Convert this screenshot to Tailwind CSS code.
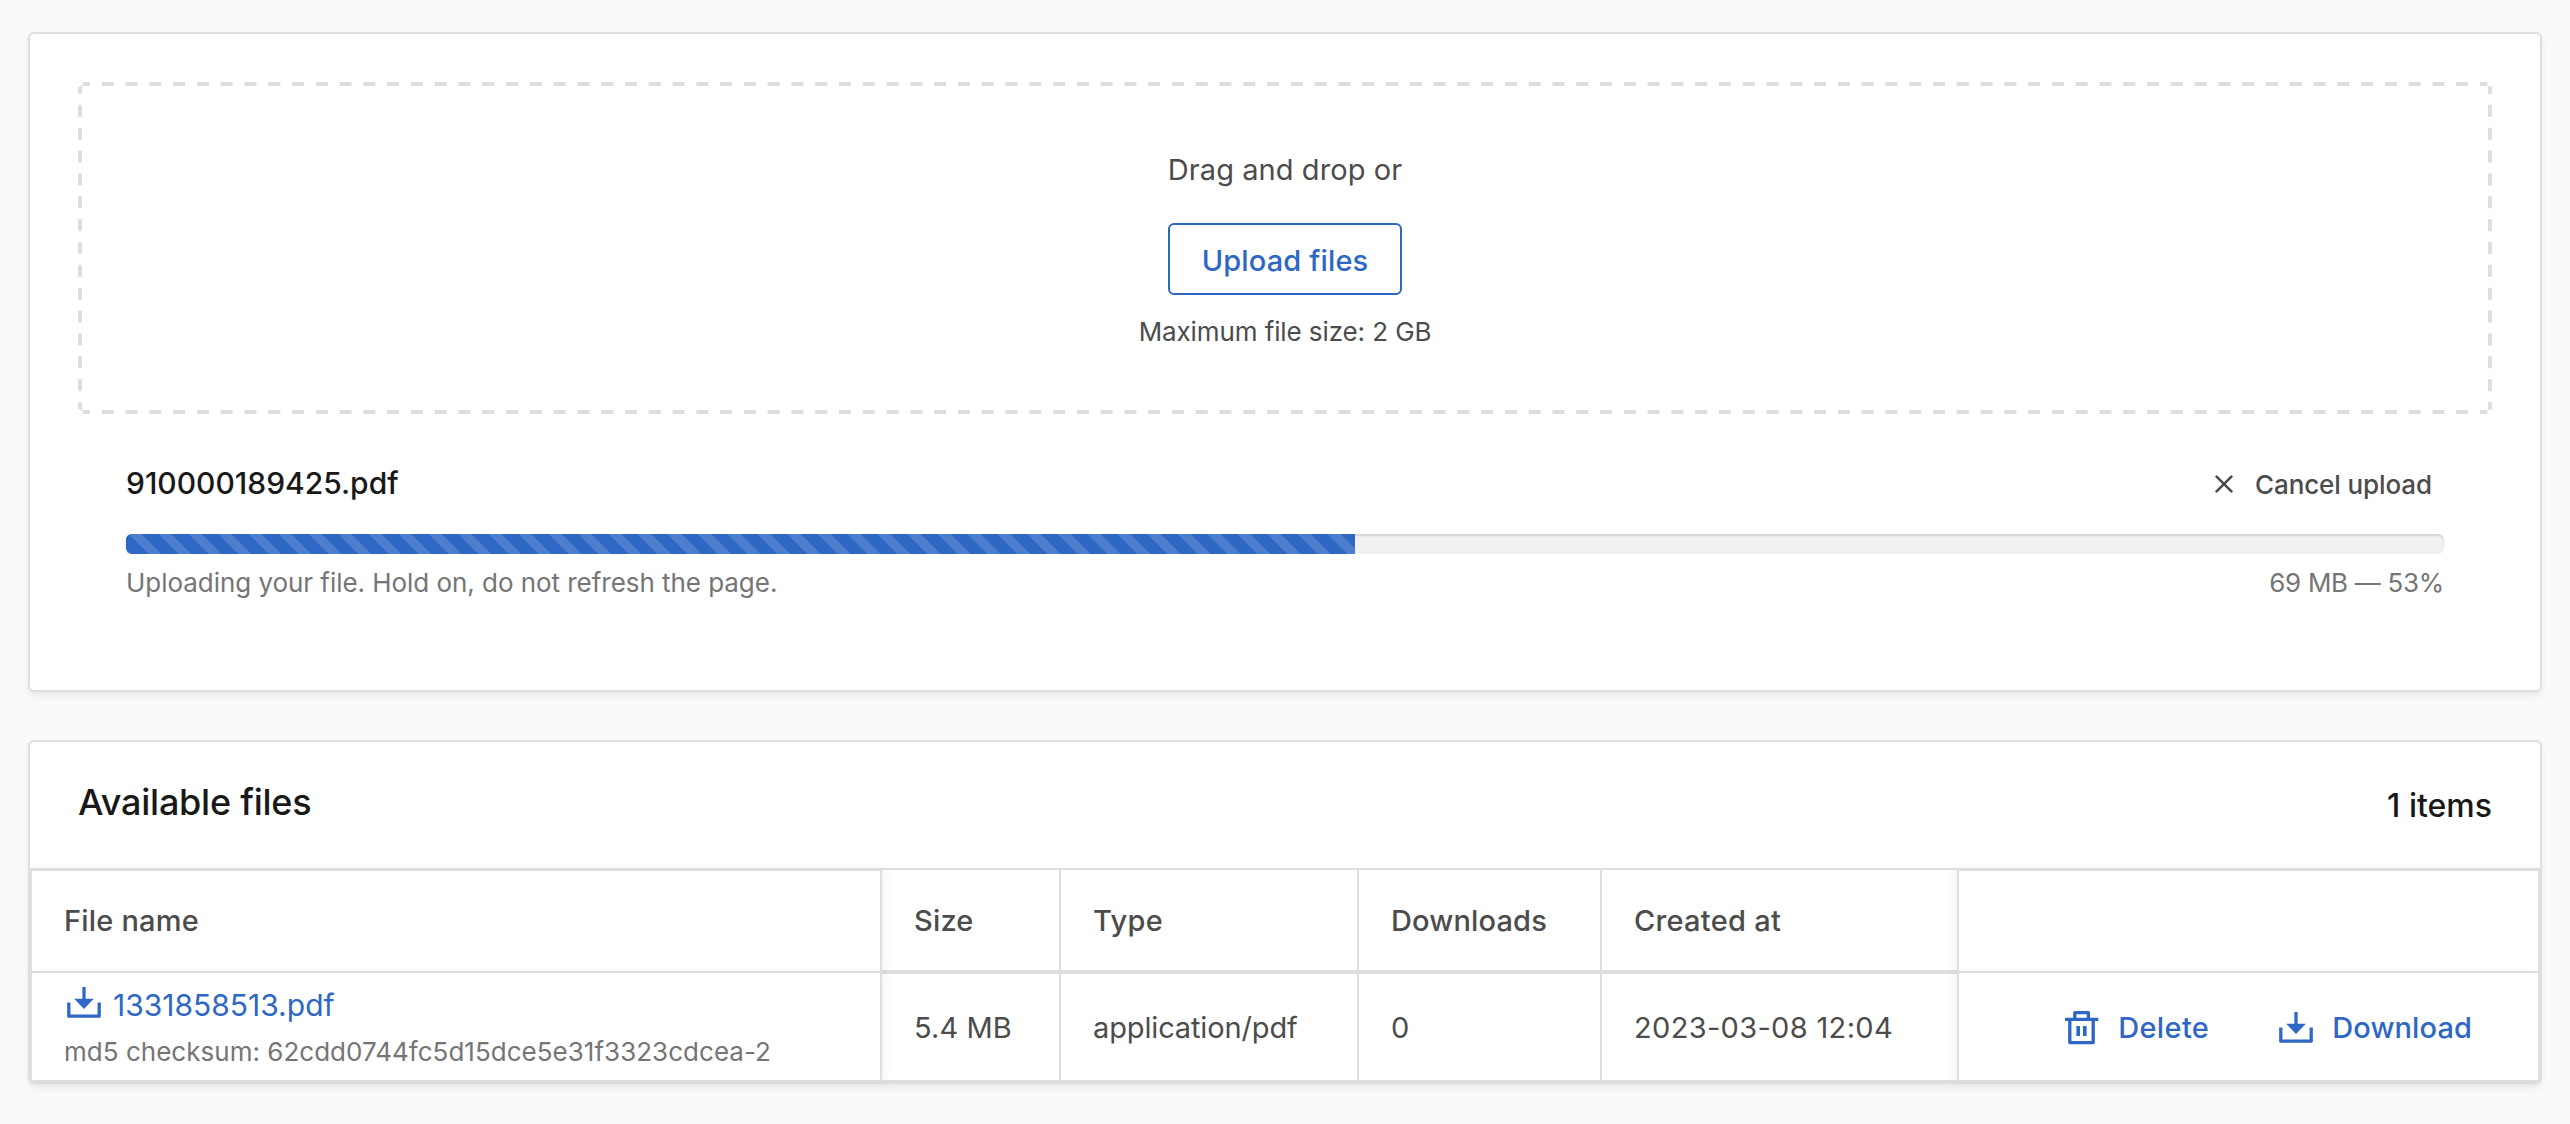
<!DOCTYPE html>
<html lang="en">
<head>
<meta charset="utf-8">
<title>Files</title>
<script src="https://cdn.jsdelivr.net/npm/@tailwindcss/browser@4"></script>
</head>
<body class="bg-[#fafafa] font-['Inter',sans-serif] text-[#4c4c4c]">
<main class="flex h-[1124px] w-[2570px] flex-col gap-12 pt-8 pr-7 pl-7">

  <section class="h-[660px] shrink-0 rounded-md border-2 border-[#dedede] bg-white px-12 pt-12 shadow-[0_4px_6px_rgba(0,0,0,0.07)]">
    <div class="relative flex h-[332px] flex-col items-center pt-[66px]">
      <svg class="absolute inset-0 h-full w-full" viewBox="0 0 2414 332" fill="none" stroke="#dedede" stroke-width="4">
        <path d="M0 2H2414M0 330H2414" stroke-dasharray="12 11.782"/>
        <path d="M2 0V332M2412 0V332" stroke-dasharray="12 10.857"/>
        <path d="M0 0h5L4 4L0 5zM2414 0h-5l1 4l4 1zM0 332h5l-1-4l-4-1zM2414 332h-5l1-4l4-1z" fill="#fff" stroke="none"/>
      </svg>
      <p class="text-[29px] leading-[44px] tracking-[0.07px]">Drag and drop or</p>
      <button class="mt-[31px] flex h-[72px] w-[234px] items-center justify-center rounded-md border-2 border-[#2e67c4] bg-white pt-[3px] text-[29px] leading-[44px] font-medium tracking-[0.14px] text-[#2e67c4]">Upload files</button>
      <p class="mt-[17px] text-[26px] leading-10 tracking-[-0.1px]">Maximum file size: 2 GB</p>
    </div>

    <div class="mx-12 mt-[47px]">
      <div class="flex items-center justify-between">
        <h2 class="text-[30px] leading-[44px] font-medium text-[#191919]">910000189425.pdf</h2>
        <button class="flex items-center gap-[22px] pr-3 text-[26px] leading-10 font-medium tracking-[-0.1px]">
          <svg class="mt-px h-[18px] w-[18px]" viewBox="0 0 18 18" fill="none" stroke="#4c4c4c" stroke-width="2.6" stroke-linecap="round"><path d="M1.6 1.6L16.4 16.4M16.4 1.6L1.6 16.4"/></svg>
          <span class="pt-[3px]">Cancel upload</span>
        </button>
      </div>
      <div class="mt-[29px] h-5 overflow-hidden rounded-md bg-[#f1f1f1] shadow-[inset_0_2px_2px_rgba(0,0,0,0.12)]">
        <div class="h-full w-[1229px] bg-[#2e67c4] bg-[repeating-linear-gradient(45deg,#4d7ecd_0px,#4d7ecd_3.54px,#2e67c4_3.54px,#2e67c4_15.56px,#4d7ecd_15.56px,#4d7ecd_21.213px)]"></div>
      </div>
      <div class="mt-[9px] flex justify-between text-[26px] leading-10 text-[#757575]">
        <p class="tracking-[-0.045px]">Uploading your file. Hold on, do not refresh the page.</p>
        <p class="tracking-[-0.3px]">69 MB — 53%</p>
      </div>
    </div>
  </section>

  <section class="h-[344px] shrink-0 rounded-md border-2 border-[#dedede] bg-white shadow-[0_4px_6px_rgba(0,0,0,0.07)]">
    <header class="flex h-[126px] items-start justify-between px-12 pt-9 font-medium text-[#191919]">
      <h2 class="text-[36px] leading-[48px] tracking-[-0.25px]">Available files</h2>
      <span class="mt-[5px] text-[32px] leading-[46px]">1 items</span>
    </header>

    <div class="grid grid-cols-[852px_179px_298px_243px_355px_583px] grid-rows-[104px_110px] text-[29px] leading-[44px] [&>div]:border-[#dedede]">
      <div class="z-10 flex items-center border-t-[3px] border-r-2 border-b border-l-2 bg-white pl-8 font-medium tracking-[0.2px] shadow-[4px_0_8px_rgba(0,0,0,0.04)]">File name</div>
      <div class="flex items-center border-y-2 border-r-2 pt-[2px] pl-8 font-medium tracking-[0.2px]">Size</div>
      <div class="flex items-center border-y-2 border-r-2 pt-[2px] pl-8 font-medium tracking-[0.3px]">Type</div>
      <div class="flex items-center border-y-2 border-r-2 pt-[2px] pl-8 font-medium tracking-[0.15px]">Downloads</div>
      <div class="flex items-center border-y-2 pt-[2px] pl-8 font-medium tracking-[0.28px]">Created at</div>
      <div class="z-10 border-x-2 border-t-[3px] border-b bg-white shadow-[-4px_0_8px_rgba(0,0,0,0.04)]"></div>

      <div class="z-10 flex flex-col border-t border-r-2 border-b-2 border-l-2 bg-white pt-[8px] pl-8 shadow-[4px_0_8px_rgba(0,0,0,0.04)]">
        <a class="flex items-center gap-3 pl-[3px] text-[30px] leading-[48px] text-[#2e67c4]">
          <svg class="-mt-[5px] h-[31px] w-[34px]" viewBox="0 0 34 31" fill="none" stroke="#2e67c4" stroke-width="3.3" stroke-linejoin="round"><path d="M1.8 15.5V29.2H32.2V15.5"/><path d="M17 0V13"/><path d="M7.2 11.8H26.8L17 22z" fill="#2e67c4" stroke="none"/></svg>
          <span>1331858513.pdf</span>
        </a>
        <span class="mt-[3px] text-[26px] leading-10 tracking-[0.02px] text-[#757575]">md5 checksum: 62cdd0744fc5d15dce5e31f3323cdcea-2</span>
      </div>
      <div class="flex items-center border-y-2 border-r-2 pt-[2px] pl-8 tracking-[0.1px]">5.4 MB</div>
      <div class="flex items-center border-y-2 border-r-2 pt-[2px] pl-8 tracking-[-0.14px]">application/pdf</div>
      <div class="flex items-center border-y-2 border-r-2 pt-[2px] pl-8">0</div>
      <div class="flex items-center border-y-2 pt-[2px] pl-8 tracking-[0.33px]">2023-03-08 12:04</div>
      <div class="z-10 flex items-center justify-end border-x-2 border-t border-b-2 bg-white pt-[2px] pr-[66px] font-medium text-[#2e67c4] shadow-[-4px_0_8px_rgba(0,0,0,0.04)]">
        <button class="mr-[70px] flex items-center gap-[19px]">
          <svg class="h-[34px] w-[34px]" viewBox="0 0 34 34" fill="none" stroke="#2e67c4" stroke-width="3.3" stroke-linejoin="round"><path d="M0 8.4H33.3"/><path d="M9.8 8V1.7H23.4V8"/><path d="M4.8 8V31.6H28.2V8"/><path d="M13.2 15V25M19.8 15V25" stroke-width="3.6"/></svg>
          <span class="tracking-[0.35px]">Delete</span>
        </button>
        <button class="flex items-center gap-[19px]">
          <svg class="h-[31px] w-[34px]" viewBox="0 0 34 31" fill="none" stroke="#2e67c4" stroke-width="3.3" stroke-linejoin="round"><path d="M1.8 15.5V29.2H32.2V15.5"/><path d="M17 0V13"/><path d="M7.2 11.8H26.8L17 22z" fill="#2e67c4" stroke="none"/></svg>
          <span class="tracking-[0.1px]">Download</span>
        </button>
      </div>
    </div>
  </section>
</main>
</body>
</html>
